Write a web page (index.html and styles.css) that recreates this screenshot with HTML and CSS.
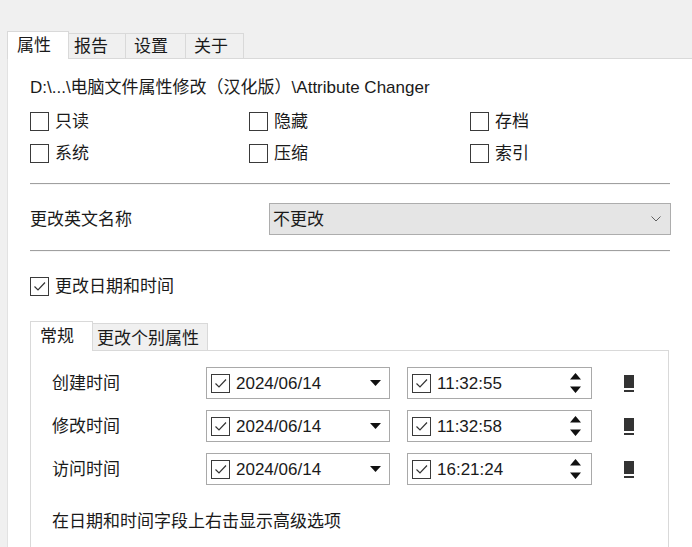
FILE: index.html
```html
<!DOCTYPE html>
<html lang="zh-CN">
<head>
<meta charset="utf-8">
<title>Attribute Changer</title>
<link rel="stylesheet" href="styles.css">
</head>
<body>
<div class="app">
  <div class="tabs">
    <div class="tab active t1">属性</div>
    <div class="tab t2">报告</div>
    <div class="tab t3">设置</div>
    <div class="tab t4">关于</div>
  </div>
  <div class="panel">
    <div class="path">D:\...\电脑文件属性修改（汉化版）\Attribute Changer</div>
    <div class="attrs">
      <div class="cb"><span class="box"></span><span class="txt">只读</span></div>
      <div class="cb"><span class="box"></span><span class="txt">隐藏</span></div>
      <div class="cb"><span class="box"></span><span class="txt">存档</span></div>
      <div class="cb"><span class="box"></span><span class="txt">系统</span></div>
      <div class="cb"><span class="box"></span><span class="txt">压缩</span></div>
      <div class="cb"><span class="box"></span><span class="txt">索引</span></div>
    </div>
    <div class="sep sep1"></div>
    <div class="name-row">
      <span class="name-label txt">更改英文名称</span>
      <div class="select">
        <span class="txt">不更改</span>
        <svg class="chev" width="10" height="6" viewBox="0 0 10 6"><polyline points="0.5,0.5 5,5 9.5,0.5" fill="none" stroke="#606060" stroke-width="1"/></svg>
      </div>
    </div>
    <div class="sep sep2"></div>
    <div class="cb date-toggle">
      <span class="box"><svg width="17" height="17" viewBox="0 0 17 17"><polyline points="3.5,8.5 7,12 14,4.5" fill="none" stroke="#333" stroke-width="1.2"/></svg></span>
      <span class="txt">更改日期和时间</span>
    </div>
    <div class="subtabs">
      <div class="subtab active">常规</div>
      <div class="subtab inactive">更改个别属性</div>
    </div>
    <div class="subpanel">
      <div class="dt-row">
        <span class="dt-label txt">创建时间</span>
        <div class="field date">
          <span class="box"><svg width="17" height="17" viewBox="0 0 17 17"><polyline points="3.5,8.5 7,12 14,4.5" fill="none" stroke="#333" stroke-width="1.2"/></svg></span>
          <span class="val">2024/06/14</span>
          <svg class="tri" width="11" height="6" viewBox="0 0 11 6"><path d="M0 0H11L5.5 6Z" fill="#111"/></svg>
        </div>
        <div class="field time">
          <span class="box"><svg width="17" height="17" viewBox="0 0 17 17"><polyline points="3.5,8.5 7,12 14,4.5" fill="none" stroke="#333" stroke-width="1.2"/></svg></span>
          <span class="val">11:32:55</span>
          <svg class="spin" width="11" height="20" viewBox="0 0 11 20"><path d="M5.5 0L11 6.5H0Z M0 13.5H11L5.5 20Z" fill="#111"/></svg>
        </div>
        <svg class="tool" width="10" height="18" viewBox="0 0 10 18"><rect x="0" y="0" width="10" height="13" fill="#333"/><rect x="0" y="15" width="10" height="2" fill="#333"/></svg>
      </div>
      <div class="dt-row">
        <span class="dt-label txt">修改时间</span>
        <div class="field date">
          <span class="box"><svg width="17" height="17" viewBox="0 0 17 17"><polyline points="3.5,8.5 7,12 14,4.5" fill="none" stroke="#333" stroke-width="1.2"/></svg></span>
          <span class="val">2024/06/14</span>
          <svg class="tri" width="11" height="6" viewBox="0 0 11 6"><path d="M0 0H11L5.5 6Z" fill="#111"/></svg>
        </div>
        <div class="field time">
          <span class="box"><svg width="17" height="17" viewBox="0 0 17 17"><polyline points="3.5,8.5 7,12 14,4.5" fill="none" stroke="#333" stroke-width="1.2"/></svg></span>
          <span class="val">11:32:58</span>
          <svg class="spin" width="11" height="20" viewBox="0 0 11 20"><path d="M5.5 0L11 6.5H0Z M0 13.5H11L5.5 20Z" fill="#111"/></svg>
        </div>
        <svg class="tool" width="10" height="18" viewBox="0 0 10 18"><rect x="0" y="0" width="10" height="13" fill="#333"/><rect x="0" y="15" width="10" height="2" fill="#333"/></svg>
      </div>
      <div class="dt-row">
        <span class="dt-label txt">访问时间</span>
        <div class="field date">
          <span class="box"><svg width="17" height="17" viewBox="0 0 17 17"><polyline points="3.5,8.5 7,12 14,4.5" fill="none" stroke="#333" stroke-width="1.2"/></svg></span>
          <span class="val">2024/06/14</span>
          <svg class="tri" width="11" height="6" viewBox="0 0 11 6"><path d="M0 0H11L5.5 6Z" fill="#111"/></svg>
        </div>
        <div class="field time">
          <span class="box"><svg width="17" height="17" viewBox="0 0 17 17"><polyline points="3.5,8.5 7,12 14,4.5" fill="none" stroke="#333" stroke-width="1.2"/></svg></span>
          <span class="val">16:21:24</span>
          <svg class="spin" width="11" height="20" viewBox="0 0 11 20"><path d="M5.5 0L11 6.5H0Z M0 13.5H11L5.5 20Z" fill="#111"/></svg>
        </div>
        <svg class="tool" width="10" height="18" viewBox="0 0 10 18"><rect x="0" y="0" width="10" height="13" fill="#333"/><rect x="0" y="15" width="10" height="2" fill="#333"/></svg>
      </div>
      <div class="hint">在日期和时间字段上右击显示高级选项</div>
    </div>
  </div>
</div>
</body>
</html>
```

FILE: styles.css
```css
* { box-sizing: border-box; }

html, body {
  margin: 0;
  height: 547px;
  overflow: hidden;
}

body {
  background: #f0f0f0;
  font-family: "Liberation Sans", "Noto Sans CJK SC", sans-serif;
  font-size: 17px;
  color: #1a1a1a;
}

.app {
  padding-top: 31px;
  height: 547px;
  display: flex;
  flex-direction: column;
}

.tabs {
  display: flex;
  align-items: flex-end;
  height: 27px;
  padding-left: 7px;
}

.tab {
  height: 25px;
  line-height: 25px;
  background: #f0f0f0;
  border: 1px solid #d9d9d9;
  border-bottom: none;
  margin-left: -1px;
  padding-left: 8px;
}

.tab.active {
  height: 28px;
  line-height: 28px;
  background: #fff;
  margin-left: 0;
  margin-bottom: -1px;
  position: relative;
  z-index: 1;
}

.t1 { width: 62px; padding-left: 9px; }
.t2 { width: 58px; padding-left: 5px; }
.t3 { width: 61px; }
.t4 { width: 59px; }

.panel {
  flex: 1;
  margin-left: 7px;
  background: #fff;
  border-top: 1px solid #d9d9d9;
  border-left: 1px solid #e2e2e2;
  padding: 0 22px 0 22px;
  display: flex;
  flex-direction: column;
}

.txt {
  padding-top: 2px;
}

.path {
  margin-top: 15px;
  padding-top: 2px;
  line-height: 24px;
  height: 26px;
  white-space: nowrap;
}

.attrs {
  margin-top: 5px;
  display: grid;
  grid-template-columns: 219px 221px 1fr;
  grid-auto-rows: 32px;
}

.cb {
  display: flex;
  align-items: center;
  gap: 6px;
  height: 32px;
  line-height: 24px;
}

.box {
  width: 19px;
  height: 19px;
  border: 1px solid #3a3a3a;
  background: #fff;
  flex: none;
  display: flex;
  align-items: center;
  justify-content: center;
}

.sep {
  height: 2px;
  background: #a0a0a0;
  border-bottom: 1px solid #f6f6f6;
}

.sep1 { margin-top: 14px; }
.sep2 { margin-top: 15px; }

.name-row {
  margin-top: 18px;
  display: flex;
  align-items: center;
  height: 32px;
}

.name-label {
  width: 239px;
  flex: none;
  line-height: 24px;
}

.select {
  flex: 1;
  height: 32px;
  margin-right: -1px;
  background: #e5e5e5;
  border: 1px solid #adadad;
  display: flex;
  align-items: center;
  justify-content: space-between;
  padding: 0 9px 0 3px;
  line-height: 24px;
}

.date-toggle {
  margin-top: 18px;
}

.subtabs {
  margin-top: 19px;
  display: flex;
  align-items: flex-end;
  height: 29px;
}

.subtab {
  border: 1px solid #d9d9d9;
  border-bottom: none;
}

.subtab.active {
  width: 63px;
  height: 30px;
  line-height: 29px;
  padding-left: 9px;
  background: #fff;
  margin-bottom: -1px;
  position: relative;
  z-index: 1;
}

.subtab.inactive {
  width: 116px;
  height: 27px;
  line-height: 29px;
  padding-left: 4px;
  background: #f0f0f0;
  margin-left: -1px;
}

.subpanel {
  flex: 1;
  border: 1px solid #d9d9d9;
  border-bottom: none;
  margin-right: 1px;
  padding: 16px 0 0 21px;
  display: flex;
  flex-direction: column;
  gap: 11px;
}

.dt-row {
  display: flex;
  align-items: center;
  height: 32px;
}

.dt-label {
  width: 154px;
  flex: none;
  line-height: 24px;
}

.field {
  height: 32px;
  border: 1px solid #a9a9a9;
  background: #fff;
  display: flex;
  align-items: center;
  padding-left: 4px;
  line-height: 24px;
}

.field .box {
  margin-right: 6px;
}

.field .val {
  flex: 1;
  padding-top: 1px;
}

.field.date {
  width: 184px;
  padding-right: 8px;
}

.field.time {
  width: 185px;
  margin-left: 17px;
  padding-right: 10px;
}

.spin {
  display: block;
}

.tool {
  margin-left: 32px;
  margin-top: 2px;
}

.hint {
  margin-top: 12px;
  padding-top: 2px;
  line-height: 24px;
}
```
